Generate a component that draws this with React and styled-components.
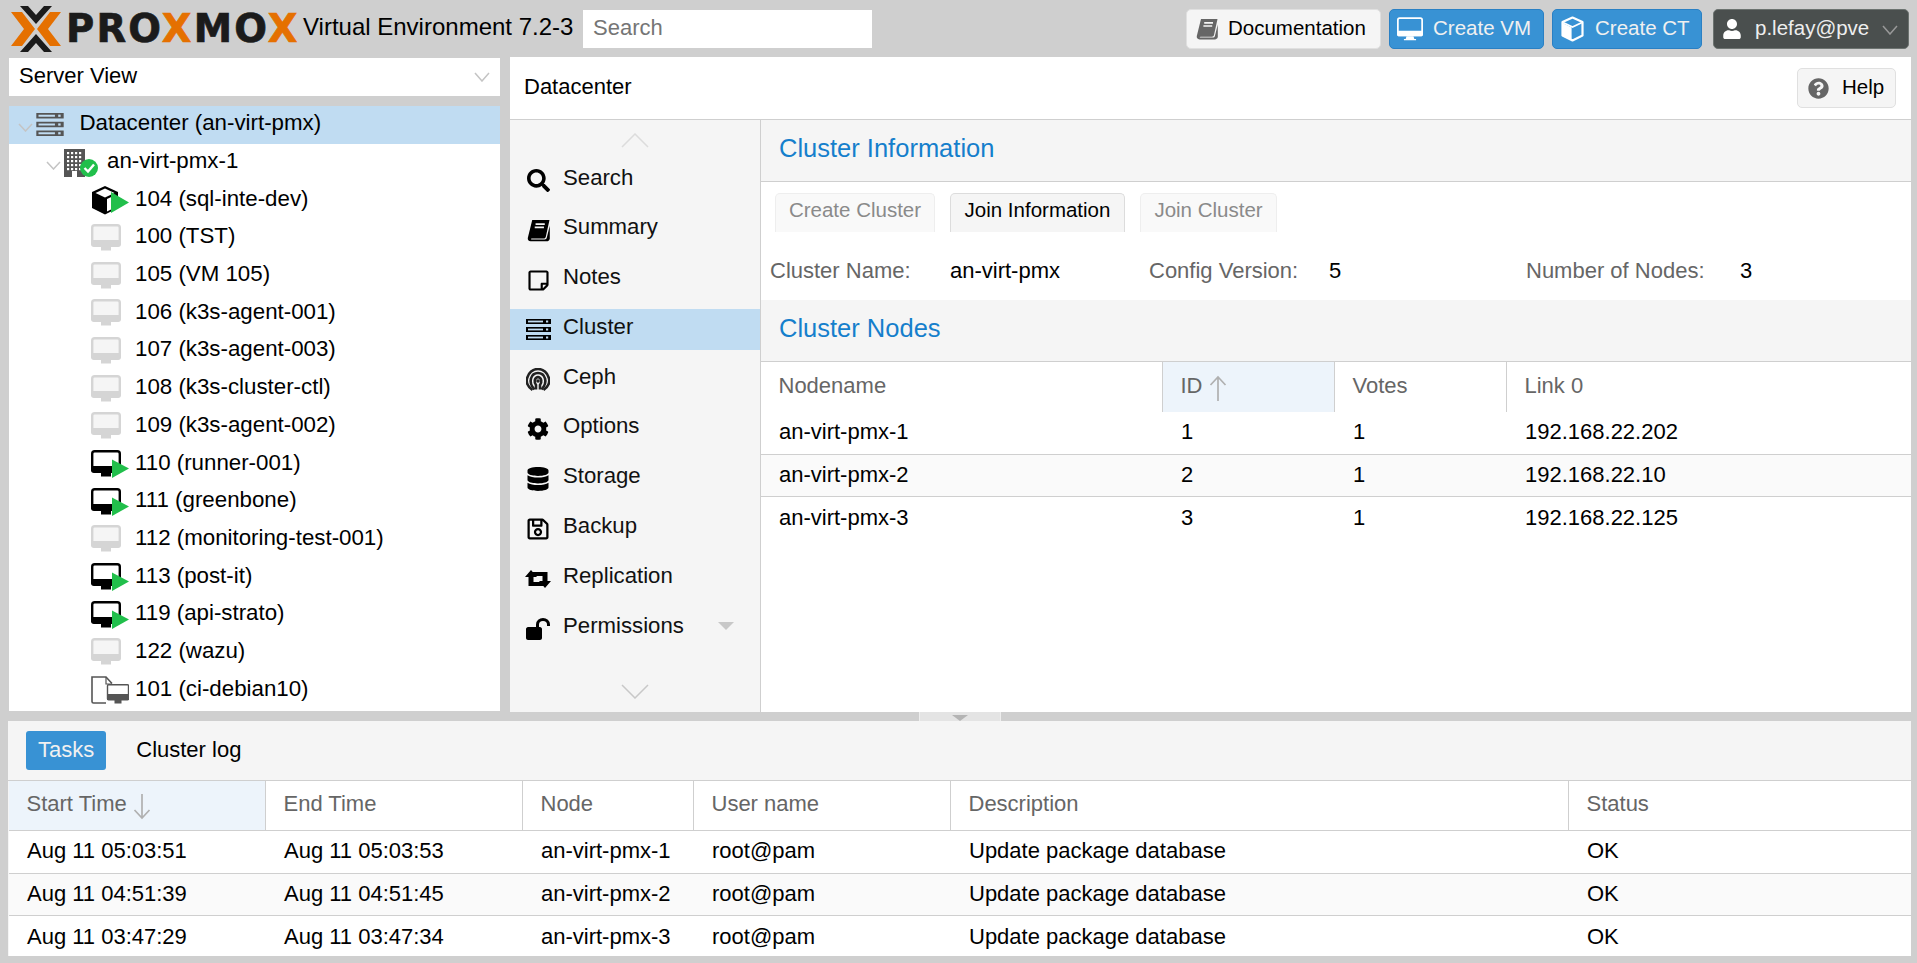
import styled, { createGlobalStyle } from 'styled-components';
import {
  FaSearch, FaRegStickyNote, FaCog, FaDatabase, FaRegSave, FaUser, FaQuestionCircle,
} from 'react-icons/fa';

const GlobalStyle = createGlobalStyle`
  html, body {
    margin: 0;
    padding: 0;
    height: 100%;
    overflow: hidden;
    background: #cfcfcf;
    font-family: "Liberation Sans", Arial, sans-serif;
    font-size: 22px;
    color: #000;
  }
`;

const TREE = [
  { id: 'dc', depth: 0, icon: 'server', label: 'Datacenter (an-virt-pmx)', selected: true },
  { id: 'node', depth: 1, icon: 'node', label: 'an-virt-pmx-1' },
  { id: 104, depth: 2, icon: 'ct', label: '104 (sql-inte-dev)' },
  { id: 100, depth: 2, icon: 'off', label: '100 (TST)' },
  { id: 105, depth: 2, icon: 'off', label: '105 (VM 105)' },
  { id: 106, depth: 2, icon: 'off', label: '106 (k3s-agent-001)' },
  { id: 107, depth: 2, icon: 'off', label: '107 (k3s-agent-003)' },
  { id: 108, depth: 2, icon: 'off', label: '108 (k3s-cluster-ctl)' },
  { id: 109, depth: 2, icon: 'off', label: '109 (k3s-agent-002)' },
  { id: 110, depth: 2, icon: 'on', label: '110 (runner-001)' },
  { id: 111, depth: 2, icon: 'on', label: '111 (greenbone)' },
  { id: 112, depth: 2, icon: 'off', label: '112 (monitoring-test-001)' },
  { id: 113, depth: 2, icon: 'on', label: '113 (post-it)' },
  { id: 119, depth: 2, icon: 'on', label: '119 (api-strato)' },
  { id: 122, depth: 2, icon: 'off', label: '122 (wazu)' },
  { id: 101, depth: 2, icon: 'template', label: '101 (ci-debian10)' },
];

const NODE_COLS = '402px 172px 172px 1fr';
const NODES = [
  ['an-virt-pmx-1', '1', '1', '192.168.22.202'],
  ['an-virt-pmx-2', '2', '1', '192.168.22.10'],
  ['an-virt-pmx-3', '3', '1', '192.168.22.125'],
];

const TASK_COLS = '257px 257px 171px 257px 618px 1fr';
const TASKS = [
  ['Aug 11 05:03:51', 'Aug 11 05:03:53', 'an-virt-pmx-1', 'root@pam', 'Update package database', 'OK'],
  ['Aug 11 04:51:39', 'Aug 11 04:51:45', 'an-virt-pmx-2', 'root@pam', 'Update package database', 'OK'],
  ['Aug 11 03:47:29', 'Aug 11 03:47:34', 'an-virt-pmx-3', 'root@pam', 'Update package database', 'OK'],
];

function Chevron({ dir = 'down', color = '#c4c4c4', w = 15, h = 9 }) {
  const d = dir === 'down' ? `M1 1 L${w / 2} ${h - 1} L${w - 1} 1` : `M1 ${h - 1} L${w / 2} 1 L${w - 1} ${h - 1}`;
  return (
    <svg width={w} height={h} viewBox={`0 0 ${w} ${h}`} fill="none">
      <path d={d} stroke={color} strokeWidth="1.5" />
    </svg>
  );
}

function BookIcon({ color = '#000', size = 23, paper = '#f5f5f5' }) {
  return (
    <svg width={size} height={size} viewBox="0 0 22 22">
      <path d="M5 1 H21.5 L18 17 C17.7 18.2 17 18.7 16 18.7 H4.5 C3.6 18.7 3.4 19.6 4.4 19.6 H17 C18 19.6 18.6 19 18.9 18 L21.8 6.5 V19 C21.4 20.8 20 21.4 19 21.4 H3.5 C1.6 21.4 0.3 19.8 0.8 18 Z" fill={color} />
      <path d="M8.2 4.8 H17 M7.4 8 H16.2" stroke={paper} strokeWidth="1.7" />
    </svg>
  );
}

function ServerIcon({ color = '#000', inner = '#c0dcf2', w = 25, h = 21 }) {
  const bars = [0, 8, 16];
  return (
    <svg width={w} height={h} viewBox="0 0 25 21">
      {bars.map(y => (
        <g key={y}>
          <rect x="0" y={y} width="25" height="5" fill={color} />
          <rect x="2" y={y + 1.6} width="15" height="1.8" fill={inner} />
          <rect x="20" y={y + 1.5} width="2.2" height="2" fill={inner} />
        </g>
      ))}
    </svg>
  );
}

function CephIcon() {
  return (
    <svg width="24" height="24" viewBox="0 0 24 24" fill="none" stroke="#222">
      <path d="M6.5 22 C1.5 18.5 0 14.5 1 10.5 C2.3 4.8 7 1 12 1 C17 1 21.7 4.8 23 10.5 C24 14.5 22.5 18.5 17.5 22" strokeWidth="2.6" />
      <path d="M8.5 21.5 C4.5 17 4 13.5 5 10.5 C6 7 9 5 12 5 C15 5 18 7 19 10.5 C20 13.5 19.5 17 15.5 21.5" strokeWidth="2.6" />
      <path d="M10 21.5 V17 C8 14.5 8 10 12 9 C16 10 16 14.5 14 17 V21.5" strokeWidth="2.6" />
      <circle cx="12" cy="13" r="1.8" fill="#222" stroke="none" />
    </svg>
  );
}

function UnlockIcon() {
  return (
    <svg width="24" height="22" viewBox="0 0 24 22">
      <path d="M2 9 H14 C15 9 16 10 16 11 V20 C16 21 15 22 14 22 H2 C1 22 0 21 0 20 V11 C0 10 1 9 2 9 Z" fill="#000" />
      <path d="M11.5 10 V6.5 C11.5 3.5 14 1.5 17 1.5 C20 1.5 22.5 3.5 22.5 6.5 V8" fill="none" stroke="#000" strokeWidth="3" />
    </svg>
  );
}

function RetweetIcon() {
  return (
    <svg width="26" height="20" viewBox="0 0 26 20" fill="#000">
      <path d="M6 1 L12 8 H8.5 V13 H16 L19.5 17 H3.5 V8 H0 Z" />
      <path d="M20 19 L14 12 H17.5 V7 H10 L6.5 3 H22.5 V12 H26 Z" />
    </svg>
  );
}

function MonitorOutline({ color = '#fff', w = 26, h = 24 }) {
  return (
    <svg width={w} height={h} viewBox="0 0 30 27">
      <rect x="1" y="1" width="28" height="20" rx="2" fill="none" stroke={color} strokeWidth="2" />
      <path d="M0 15.5 H30 V19.5 C30 21 29 22 27.5 22 H2.5 C1 22 0 21 0 19.5 Z" fill={color} />
      <path d="M11 22 H19 L20 25 H22 V26.5 H8 V25 H10 Z" fill={color} />
    </svg>
  );
}

function CubeIcon({ w = 23, h = 26 }) {
  return (
    <svg width={w} height={h} viewBox="0 0 23 26" fill="none">
      <path d="M11.5 1.5 L21.5 6 V19.5 L11.5 24.5 L1.5 19.5 V6 Z" stroke="#fff" strokeWidth="2.2" strokeLinejoin="round" />
      <path d="M2 6.5 L11.5 11 L21 6.5" stroke="#fff" strokeWidth="1.8" />
      <path d="M1.5 7 L10.6 11.4 V24 L1.5 19.5 Z" fill="#fff" />
    </svg>
  );
}

function TreeIcon({ kind }) {
  if (kind === 'server') return <ServerIcon color="#555" w={28} h={23} />;
  if (kind === 'node') {
    return (
      <svg width="34" height="28" viewBox="0 0 34 28">
        <path d="M0 0 H21 V28 H0 Z" fill="#555" />
        {[3, 7, 11, 15, 19].map(y => [3, 7, 11, 15].map(x => (
          <rect key={`${x}-${y}`} x={x} y={y} width="2.2" height="2.2" fill="#fff" />
        )))}
        <rect x="8" y="22" width="5" height="6" fill="#fff" />
        <circle cx="25" cy="19" r="9" fill="#21bf4b" />
        <path d="M20.5 19 L24 22.5 L30 15.5" stroke="#fff" strokeWidth="2.4" fill="none" />
      </svg>
    );
  }
  if (kind === 'ct') {
    return (
      <svg width="38" height="30" viewBox="0 0 38 30">
        <path d="M14 1 L27 7 V23 L14 29.5 L1 23 V7 Z" fill="#000" />
        <path d="M14 3.5 L23.5 8 L14 12.5 L4.5 8 Z" fill="#fff" />
        <path d="M16 14 L25 9.8 V22 L16 26.5 Z" fill="#fff" />
        <path d="M20 7 L38 17.5 L20 28 Z" fill="#21bf4b" />
      </svg>
    );
  }
  if (kind === 'on') {
    return (
      <svg width="38" height="28" viewBox="0 0 38 28">
        <rect x="1.2" y="1.2" width="27.6" height="20" rx="2.5" fill="#fff" stroke="#000" strokeWidth="2.4" />
        <path d="M0 16 H30 V20 C30 22 29 23 27 23 H3 C1 23 0 22 0 20 Z" fill="#000" />
        <rect x="10" y="23" width="10" height="3.5" fill="#000" />
        <path d="M21 9.5 L38 18.5 L21 28 Z" fill="#21bf4b" />
      </svg>
    );
  }
  if (kind === 'off') {
    return (
      <svg width="38" height="28" viewBox="0 0 38 28">
        <rect x="1.2" y="1.2" width="27.6" height="20" rx="2.5" fill="#f5f5f5" stroke="#d5d5d5" strokeWidth="2.4" />
        <path d="M0 16 H30 V20 C30 22 29 23 27 23 H3 C1 23 0 22 0 20 Z" fill="#d5d5d5" />
        <rect x="10" y="23" width="10" height="3.5" fill="#d5d5d5" />
      </svg>
    );
  }
  return (
    <svg width="38" height="28" viewBox="0 0 38 28">
      <path d="M15 27 H2.5 C1.5 27 1 26.5 1 25.5 V1 H15 L21 7.5" fill="none" stroke="#555" strokeWidth="1.6" />
      <path d="M15 1 V8 H21" fill="none" stroke="#555" strokeWidth="1.2" />
      <rect x="16.5" y="8.8" width="21" height="15" rx="1" fill="#fff" stroke="#555" strokeWidth="1.4" />
      <rect x="16" y="18" width="22" height="6" fill="#555" />
      <rect x="23.5" y="24" width="7" height="3.5" fill="#555" />
    </svg>
  );
}

function ProxmoxMark() {
  return (
    <svg width="50" height="46" viewBox="0 0 50 46">
      <path d="M9 0 L17 0 L25 9 L33 0 L41 0 L28.5 14 L25 18 L21.5 14 Z" fill="#1b1b1b" />
      <path d="M9 46 L17 46 L25 37 L33 46 L41 46 L28.5 32 L25 28 L21.5 32 Z" fill="#1b1b1b" />
      <path d="M0 6 L11 6 L24 23 L11 40 L0 40 L13 23 Z" fill="#e57000" />
      <path d="M50 6 L39 6 L26 23 L39 40 L50 40 L37 23 Z" fill="#e57000" />
    </svg>
  );
}

function SortArrow({ dir }) {
  return (
    <ArrowSvg width="18" height="27" viewBox="0 0 18 27" fill="none" stroke="#b0b0b0" strokeWidth="1.7">
      {dir === 'up'
        ? <path d="M9 26 V2 M1.5 10 L9 2 L16.5 10" />
        : <path d="M9 1 V25 M1.5 17 L9 25 L16.5 17" />}
    </ArrowSvg>
  );
}

function App() {
  return (
    <>
      <GlobalStyle />
      <Page>
        <TopBar>
          <Logo>
            <ProxmoxMark />
            <Wordmark>PRO<Orange>X</Orange>MO<Orange>X</Orange></Wordmark>
          </Logo>
          <Version>Virtual Environment 7.2-3</Version>
          <SearchBox>Search</SearchBox>
          <TopActions>
            <TopButton $w={195} $pad={9} $gap={10}><BookIcon color="#666" size={22} /><RaisedText>Documentation</RaisedText></TopButton>
            <TopButton $w={155} $pad={7} $gap={10} $blue><MonitorOutline /><RaisedText>Create VM</RaisedText></TopButton>
            <TopButton $w={150} $pad={8} $gap={11} $blue><CubeIcon /><RaisedText>Create CT</RaisedText></TopButton>
            <UserButton>
              <FaUser size={20} color="#fff" />
              <RaisedText>p.lefay@pve</RaisedText>
              <UserCaret><Chevron color="#999" w={16} h={10} /></UserCaret>
            </UserButton>
          </TopActions>
        </TopBar>

        <Middle>
          <LeftColumn>
            <ViewSelect>
              <RaisedText>Server View</RaisedText>
              <Chevron w={16} h={10} />
            </ViewSelect>
            <Tree>
              {TREE.map(row => (
                <TreeRow key={row.id} $depth={row.depth} $selected={row.selected}>
                  {row.depth < 2 && <TreeToggle><Chevron w={15} h={9} /></TreeToggle>}
                  <TreeIconSlot $depth={row.depth}><TreeIcon kind={row.icon} /></TreeIconSlot>
                  <TreeLabel>{row.label}</TreeLabel>
                </TreeRow>
              ))}
            </Tree>
          </LeftColumn>

          <MainPanel>
            <TitleBar>
              <RaisedText>Datacenter</RaisedText>
              <HelpButton><FaQuestionCircle size={21} color="#666" /><RaisedText>Help</RaisedText></HelpButton>
            </TitleBar>
            <MainBody>
              <SideMenu>
                <MenuScroll><Chevron dir="up" color="#dcdcdc" w={28} h={15} /></MenuScroll>
                <MenuList>
                  <MenuItem><MenuIcon><FaSearch size={23} /></MenuIcon>Search</MenuItem>
                  <MenuItem><MenuIcon><BookIcon /></MenuIcon>Summary</MenuItem>
                  <MenuItem><MenuIcon><FaRegStickyNote size={23} /></MenuIcon>Notes</MenuItem>
                  <MenuItem $active><MenuIcon><ServerIcon /></MenuIcon>Cluster</MenuItem>
                  <MenuItem><MenuIcon><CephIcon /></MenuIcon>Ceph</MenuItem>
                  <MenuItem><MenuIcon><FaCog size={22} /></MenuIcon>Options</MenuItem>
                  <MenuItem><MenuIcon><FaDatabase size={24} /></MenuIcon>Storage</MenuItem>
                  <MenuItem><MenuIcon><FaRegSave size={24} /></MenuIcon>Backup</MenuItem>
                  <MenuItem><MenuIcon><RetweetIcon /></MenuIcon>Replication</MenuItem>
                  <MenuItem><MenuIcon><UnlockIcon /></MenuIcon>Permissions<MenuCaret /></MenuItem>
                </MenuList>
                <MenuScroll $bottom><Chevron color="#c8c8c8" w={28} h={15} /></MenuScroll>
              </SideMenu>
              <Content>
                <SectionHeader>Cluster Information</SectionHeader>
                <ClusterTabs>
                  <ClusterTab $w={160}>Create Cluster</ClusterTab>
                  <ClusterTab $w={175} $enabled>Join Information</ClusterTab>
                  <ClusterTab $w={137}>Join Cluster</ClusterTab>
                </ClusterTabs>
                <InfoRow>
                  <InfoLabel $w={180}>Cluster Name:</InfoLabel><InfoValue $w={199}>an-virt-pmx</InfoValue>
                  <InfoLabel $w={180}>Config Version:</InfoLabel><InfoValue $w={197}>5</InfoValue>
                  <InfoLabel $w={214}>Number of Nodes:</InfoLabel><InfoValue>3</InfoValue>
                </InfoRow>
                <SectionHeader>Cluster Nodes</SectionHeader>
                <HeadRow $cols={NODE_COLS}>
                  <HeadCell>Nodename</HeadCell>
                  <HeadCell $sorted>ID <SortArrow dir="up" /></HeadCell>
                  <HeadCell>Votes</HeadCell>
                  <HeadCell $last>Link 0</HeadCell>
                </HeadRow>
                {NODES.map((row, i) => (
                  <BodyRow key={row[0]} $cols={NODE_COLS} $alt={i === 1} $open={i === 2}>
                    {row.map((cell, j) => <BodyCell key={j}>{cell}</BodyCell>)}
                  </BodyRow>
                ))}
              </Content>
            </MainBody>
          </MainPanel>
        </Middle>

        <Splitter>
          <SplitHandle><SplitCaret /></SplitHandle>
        </Splitter>

        <BottomPanel>
          <TaskToolbar>
            <TaskTab $active>Tasks</TaskTab>
            <TaskTab>Cluster log</TaskTab>
          </TaskToolbar>
          <TaskTable>
            <HeadRow $cols={TASK_COLS} $bottom>
              <HeadCell $sorted $first>Start Time <SortArrow dir="down" /></HeadCell>
              <HeadCell>End Time</HeadCell>
              <HeadCell>Node</HeadCell>
              <HeadCell>User name</HeadCell>
              <HeadCell>Description</HeadCell>
              <HeadCell $last>Status</HeadCell>
            </HeadRow>
            {TASKS.map((row, i) => (
              <BodyRow key={row[0]} $cols={TASK_COLS} $alt={i === 1} $open={i === 2}>
                {row.map((cell, j) => <BodyCell key={j}>{cell}</BodyCell>)}
              </BodyRow>
            ))}
          </TaskTable>
        </BottomPanel>
      </Page>
    </>
  );
}

const Page = styled.div`
  width: 1917px;
  height: 963px;
  display: grid;
  grid-template-rows: 57px 655px 9px 235px;
  background: #cfcfcf;
  overflow: hidden;
`;

const TopBar = styled.header`
  display: flex;
  align-items: center;
  padding: 0 8px 0 11px;
`;

const Logo = styled.div`
  display: flex;
  align-items: center;
  gap: 5px;
  width: 292px;
`;

const Wordmark = styled.span`
  font-family: "DejaVu Sans", sans-serif;
  font-weight: 700;
  font-size: 38.5px;
  letter-spacing: 2.2px;
  line-height: 46px;
  color: #1b1b1b;
  -webkit-text-stroke: 0.7px currentColor;
`;

const Orange = styled.span`
  color: #e57000;
`;

const Version = styled.div`
  width: 280px;
  padding-bottom: 4px;
  font-size: 24px;
  white-space: nowrap;
`;

const SearchBox = styled.div`
  width: 289px;
  height: 38px;
  box-sizing: border-box;
  padding: 0 10px;
  background: #fff;
  color: #757575;
  line-height: 36px;
`;

const TopActions = styled.div`
  margin-left: auto;
  display: flex;
  gap: 8px;
`;

const RaisedText = styled.span`
  margin-top: -2px;
`;

const TopButton = styled.button`
  width: ${p => p.$w}px;
  height: 40px;
  box-sizing: border-box;
  display: flex;
  align-items: center;
  gap: ${p => p.$gap}px;
  padding: 0 0 0 ${p => p.$pad}px;
  font: inherit;
  font-size: 20.5px;
  border-radius: 5px;
  border: 1px solid ${p => (p.$blue ? '#2a80c4' : '#e0e0e0')};
  background: ${p => (p.$blue ? '#3892d4' : '#f5f5f5')};
  color: ${p => (p.$blue ? '#f0f0f0' : '#000')};
`;

const UserButton = styled.button`
  width: 196px;
  height: 40px;
  margin-left: 3px;
  box-sizing: border-box;
  display: flex;
  align-items: center;
  gap: 13px;
  padding: 0 0 0 8px;
  font: inherit;
  font-size: 20.5px;
  border: 1px solid #6c7370;
  border-radius: 5px;
  background: #4a4f4e;
  color: #eee;
`;

const UserCaret = styled.span`
  display: flex;
  margin-top: 3px;
`;

const Middle = styled.div`
  display: grid;
  grid-template-columns: 491px 1401px;
  gap: 10px;
  padding: 0 6px 0 9px;
  min-height: 0;
`;

const LeftColumn = styled.div`
  display: flex;
  flex-direction: column;
  gap: 10px;
  padding-top: 1px;
  min-height: 0;
`;

const ViewSelect = styled.div`
  height: 38px;
  flex: none;
  box-sizing: border-box;
  padding: 0 10px;
  display: flex;
  align-items: center;
  justify-content: space-between;
  background: #fff;
`;

const Tree = styled.div`
  height: 605px;
  background: #fff;
  overflow: hidden;
`;

const TreeRow = styled.div`
  height: 37.7px;
  display: flex;
  align-items: center;
  background: ${p => (p.$selected ? '#c0dcf2' : '#fff')};
  padding-left: ${p => [9, 37, 82][p.$depth]}px;
`;

const TreeToggle = styled.span`
  display: flex;
  width: 18px;
  flex: none;
  margin-top: 5px;
`;

const TreeIconSlot = styled.span`
  display: flex;
  align-items: center;
  flex: none;
  width: ${p => [43.5, 43, 44][p.$depth]}px;
`;

const TreeLabel = styled.span`
  font-size: 22.3px;
  margin-top: -3px;
  white-space: nowrap;
`;

const MainPanel = styled.section`
  display: flex;
  flex-direction: column;
  background: #fff;
  min-height: 0;
`;

const TitleBar = styled.div`
  height: 63px;
  flex: none;
  box-sizing: border-box;
  display: flex;
  align-items: center;
  justify-content: space-between;
  padding: 0 15px 0 14px;
  border-bottom: 1px solid #cfcfcf;
`;

const HelpButton = styled.button`
  width: 99px;
  height: 40px;
  box-sizing: border-box;
  display: flex;
  align-items: center;
  gap: 13px;
  padding: 0 0 0 10px;
  font: inherit;
  font-size: 20.5px;
  background: #f5f5f5;
  border: 1px solid #e0e0e0;
  border-radius: 5px;
`;

const MainBody = styled.div`
  flex: 1;
  display: grid;
  grid-template-columns: 251px 1fr;
  min-height: 0;
`;

const SideMenu = styled.nav`
  position: relative;
  background: #f5f5f5;
  border-right: 1px solid #cfcfcf;
`;

const MenuScroll = styled.div`
  position: absolute;
  left: 0;
  right: 0;
  display: flex;
  justify-content: center;
  ${p => (p.$bottom ? 'bottom: 13px;' : 'top: 13px;')}
`;

const MenuList = styled.div`
  display: flex;
  flex-direction: column;
  gap: 8.8px;
  padding-top: 40px;
`;

const MenuItem = styled.div`
  height: 41px;
  box-sizing: border-box;
  display: flex;
  align-items: center;
  padding: 0 0 6px 14px;
  font-size: 22.2px;
  background: ${p => (p.$active ? '#c0dcf2' : 'transparent')};
  color: #111;
`;

const MenuIcon = styled.span`
  width: 28px;
  margin: 6px 11px 0 0;
  display: flex;
  justify-content: center;
  color: #000;
`;

const MenuCaret = styled.span`
  margin-left: auto;
  margin-right: 26px;
  width: 0;
  height: 0;
  border-left: 8px solid transparent;
  border-right: 8px solid transparent;
  border-top: 8px solid #c8c8c8;
`;

const Content = styled.div`
  display: flex;
  flex-direction: column;
  min-width: 0;
`;

const SectionHeader = styled.h2`
  margin: 0;
  height: 62px;
  flex: none;
  box-sizing: border-box;
  display: flex;
  align-items: center;
  padding: 0 18px 4px;
  font-size: 25.5px;
  font-weight: 400;
  color: #157fcc;
  background: #f5f5f5;
  border-bottom: 1px solid #cfcfcf;
`;

const ClusterTabs = styled.div`
  display: flex;
  gap: 15px;
  padding: 11px 0 0 14px;
`;

const ClusterTab = styled.div`
  width: ${p => p.$w}px;
  height: 39px;
  box-sizing: border-box;
  display: flex;
  align-items: center;
  justify-content: center;
  padding-bottom: 6px;
  font-size: 20.5px;
  border: 1px solid ${p => (p.$enabled ? '#dcdcdc' : '#eeeeee')};
  border-bottom: none;
  border-radius: 5px 5px 0 0;
  background: ${p => (p.$enabled ? '#f5f5f5' : '#f9f9f9')};
  color: ${p => (p.$enabled ? '#000' : '#8a8a8a')};
`;

const InfoRow = styled.div`
  height: 68px;
  box-sizing: border-box;
  flex: none;
  display: flex;
  align-items: center;
  padding: 10px 0 0 9px;
`;

const InfoLabel = styled.span`
  width: ${p => p.$w}px;
  color: #666;
  white-space: nowrap;
`;

const InfoValue = styled.span`
  width: ${p => (p.$w ? `${p.$w}px` : 'auto')};
`;

const HeadRow = styled.div`
  display: grid;
  grid-template-columns: ${p => p.$cols};
  height: 50px;
  flex: none;
  box-sizing: border-box;
  border-bottom: ${p => (p.$bottom ? '1px solid #cfcfcf' : 'none')};
`;

const HeadCell = styled.div`
  display: flex;
  align-items: center;
  gap: 6px;
  box-sizing: border-box;
  padding: 0 0 3px 17.5px;
  color: #666;
  background: ${p => (p.$sorted ? '#edf4fb' : '#fff')};
  border-right: ${p => (p.$last ? 'none' : '1px solid #cfcfcf')};
  border-left: ${p => (p.$sorted && !p.$first ? '1px solid #cfcfcf' : 'none')};
  margin-left: ${p => (p.$sorted && !p.$first ? '-1px' : '0')};
`;

const ArrowSvg = styled.svg`
  margin-top: 5px;
`;

const BodyRow = styled.div`
  display: grid;
  grid-template-columns: ${p => p.$cols};
  height: 42.5px;
  flex: none;
  box-sizing: border-box;
  background: ${p => (p.$alt ? '#fafafa' : '#fff')};
  border-bottom: ${p => (p.$open ? 'none' : '1px solid #cfcfcf')};
`;

const BodyCell = styled.div`
  display: flex;
  align-items: center;
  padding: 0 0 1px 18px;
  white-space: nowrap;
`;

const Splitter = styled.div`
  display: flex;
  justify-content: center;
  padding-left: 2px;
`;

const SplitHandle = styled.div`
  width: 80px;
  display: flex;
  justify-content: center;
  background: #e4e4e4;
  border-left: 1px solid #eeeeee;
  border-right: 1px solid #eeeeee;
`;

const SplitCaret = styled.span`
  margin-top: 3px;
  width: 0;
  height: 0;
  border-left: 8px solid transparent;
  border-right: 8px solid transparent;
  border-top: 6px solid #b4b4b4;
`;

const BottomPanel = styled.section`
  margin: 0 6px 0 8px;
  display: flex;
  flex-direction: column;
  background: #f5f5f5;
  min-height: 0;
  overflow: hidden;
`;

const TaskToolbar = styled.div`
  height: 60px;
  flex: none;
  box-sizing: border-box;
  display: flex;
  align-items: center;
  gap: 10px;
  padding: 0 0 1px 18px;
  border-bottom: 1px solid #cfcfcf;
`;

const TaskTab = styled.div`
  height: 39px;
  display: flex;
  align-items: center;
  padding: 0 12px;
  border-radius: 3px;
  background: ${p => (p.$active ? '#3892d4' : 'transparent')};
  color: ${p => (p.$active ? '#f0f0f0' : '#000')};
  margin-right: ${p => (p.$active ? '8px' : '0')};
`;

const TaskTable = styled.div`
  flex: 1;
  margin-left: 1px;
  background: #fff;
`;

export { App as default };
